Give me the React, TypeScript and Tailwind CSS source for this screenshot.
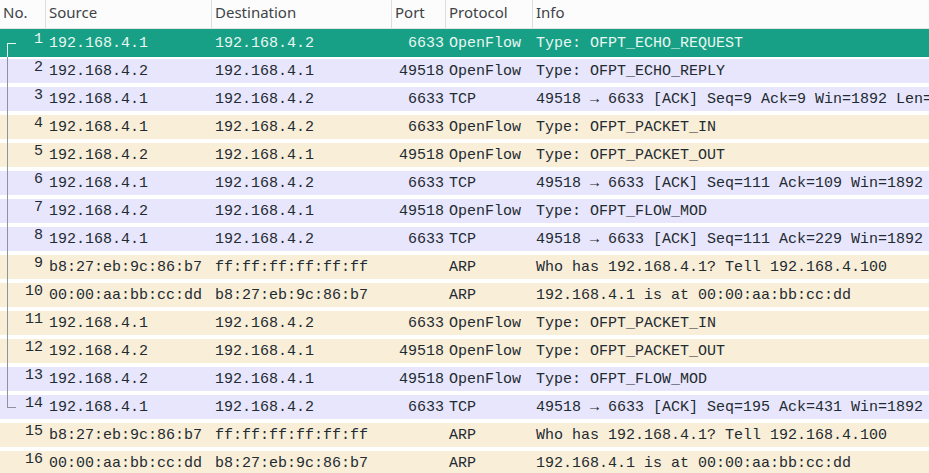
import React from "react";

type Packet = {
  no: number;
  src: string;
  dst: string;
  port: string;
  proto: string;
  info: string;
  tone: "sel" | "tcp" | "arp";
};

const packets: Packet[] = [
  { no: 1, src: "192.168.4.1", dst: "192.168.4.2", port: "6633", proto: "OpenFlow", info: "Type: OFPT_ECHO_REQUEST", tone: "sel" },
  { no: 2, src: "192.168.4.2", dst: "192.168.4.1", port: "49518", proto: "OpenFlow", info: "Type: OFPT_ECHO_REPLY", tone: "tcp" },
  { no: 3, src: "192.168.4.1", dst: "192.168.4.2", port: "6633", proto: "TCP", info: "49518 → 6633 [ACK] Seq=9 Ack=9 Win=1892 Len=0", tone: "tcp" },
  { no: 4, src: "192.168.4.1", dst: "192.168.4.2", port: "6633", proto: "OpenFlow", info: "Type: OFPT_PACKET_IN", tone: "arp" },
  { no: 5, src: "192.168.4.2", dst: "192.168.4.1", port: "49518", proto: "OpenFlow", info: "Type: OFPT_PACKET_OUT", tone: "arp" },
  { no: 6, src: "192.168.4.1", dst: "192.168.4.2", port: "6633", proto: "TCP", info: "49518 → 6633 [ACK] Seq=111 Ack=109 Win=1892 Len=0", tone: "tcp" },
  { no: 7, src: "192.168.4.2", dst: "192.168.4.1", port: "49518", proto: "OpenFlow", info: "Type: OFPT_FLOW_MOD", tone: "tcp" },
  { no: 8, src: "192.168.4.1", dst: "192.168.4.2", port: "6633", proto: "TCP", info: "49518 → 6633 [ACK] Seq=111 Ack=229 Win=1892 Len=0", tone: "tcp" },
  { no: 9, src: "b8:27:eb:9c:86:b7", dst: "ff:ff:ff:ff:ff:ff", port: "", proto: "ARP", info: "Who has 192.168.4.1? Tell 192.168.4.100", tone: "arp" },
  { no: 10, src: "00:00:aa:bb:cc:dd", dst: "b8:27:eb:9c:86:b7", port: "", proto: "ARP", info: "192.168.4.1 is at 00:00:aa:bb:cc:dd", tone: "arp" },
  { no: 11, src: "192.168.4.1", dst: "192.168.4.2", port: "6633", proto: "OpenFlow", info: "Type: OFPT_PACKET_IN", tone: "arp" },
  { no: 12, src: "192.168.4.2", dst: "192.168.4.1", port: "49518", proto: "OpenFlow", info: "Type: OFPT_PACKET_OUT", tone: "arp" },
  { no: 13, src: "192.168.4.2", dst: "192.168.4.1", port: "49518", proto: "OpenFlow", info: "Type: OFPT_FLOW_MOD", tone: "tcp" },
  { no: 14, src: "192.168.4.1", dst: "192.168.4.2", port: "6633", proto: "TCP", info: "49518 → 6633 [ACK] Seq=195 Ack=431 Win=1892 Len=0", tone: "tcp" },
  { no: 15, src: "b8:27:eb:9c:86:b7", dst: "ff:ff:ff:ff:ff:ff", port: "", proto: "ARP", info: "Who has 192.168.4.1? Tell 192.168.4.100", tone: "arp" },
  { no: 16, src: "00:00:aa:bb:cc:dd", dst: "b8:27:eb:9c:86:b7", port: "", proto: "ARP", info: "192.168.4.1 is at 00:00:aa:bb:cc:dd", tone: "arp" },
];

const cols = "grid grid-cols-[45px_166px_180px_54px_87px_1fr]";

// conversation bracket in the No. column (first..last related frame)
function Bracket({ no, sel }: { no: number; sel: boolean }) {
  if (no > 14) return null;
  const color = sel ? "bg-[#e8f6f1]" : "bg-[#8d939c]";
  if (no === 1)
    return (
      <>
        <span className={`absolute left-[7px] top-[14px] h-px w-[9px] ${color}`} />
        <span className={`absolute left-[7px] top-[14px] bottom-0 w-px ${color}`} />
      </>
    );
  if (no === 14)
    return (
      <>
        <span className={`absolute left-[7px] top-0 h-[15px] w-px ${color}`} />
        <span className={`absolute left-[7px] top-[14px] h-px w-[9px] ${color}`} />
      </>
    );
  return <span className={`absolute left-[7px] top-0 bottom-0 w-px ${color}`} />;
}

function Row({ p }: { p: Packet }) {
  const sel = p.tone === "sel";
  const band =
    p.tone === "sel" ? "bg-[#17a085] inset-y-0" : p.tone === "tcp" ? "bg-[#e7e6fc] inset-y-[2px]" : "bg-[#f9efd9] inset-y-[2px]";
  const text = sel ? "text-[#e9f6f2]" : "text-[#1f2b31]";
  return (
    <div className={`relative h-[28px] ${text}`}>
      <div className={`absolute inset-x-0 ${band}`} />
      <div className={`relative ${cols} h-full items-center whitespace-nowrap`}>
        <div className="relative h-full flex items-center justify-end pr-[2px]">
          <Bracket no={p.no} sel={sel} />
          <span className="-translate-y-[4px]">{p.no}</span>
        </div>
        <div className="pl-1">{p.src}</div>
        <div className="pl-1">{p.dst}</div>
        <div className="pr-[1px] text-right">{p.port}</div>
        <div className="pl-1">{p.proto}</div>
        <div className="pl-1 overflow-hidden">{p.info}</div>
      </div>
    </div>
  );
}

export default function App() {
  return (
    <div className="w-[929px] h-[473px] overflow-hidden bg-white">
      <div
        className={`${cols} h-[29px] bg-[#fcfcfc] border-b border-[#e2e2e2] text-[15px] text-[#3e4347]`}
        style={{ fontFamily: '"Noto Sans", sans-serif' }}
      >
        <div className="pl-[3px] pt-[1px]">No.</div>
        <div className="pl-[3px] pt-[1px] border-l border-[#dedede]">Source</div>
        <div className="pl-[3px] pt-[1px] border-l border-[#dedede]">Destination</div>
        <div className="pl-[3px] pt-[1px] border-l border-[#dedede]">Port</div>
        <div className="pl-[3px] pt-[1px] border-l border-[#dedede]">Protocol</div>
        <div className="pl-[3px] pt-[1px] border-l border-[#dedede]">Info</div>
      </div>
      <div className="text-[15px] leading-[17px]" style={{ fontFamily: '"Liberation Mono", monospace' }}>
        {packets.map((p) => (
          <Row key={p.no} p={p} />
        ))}
      </div>
    </div>
  );
}
